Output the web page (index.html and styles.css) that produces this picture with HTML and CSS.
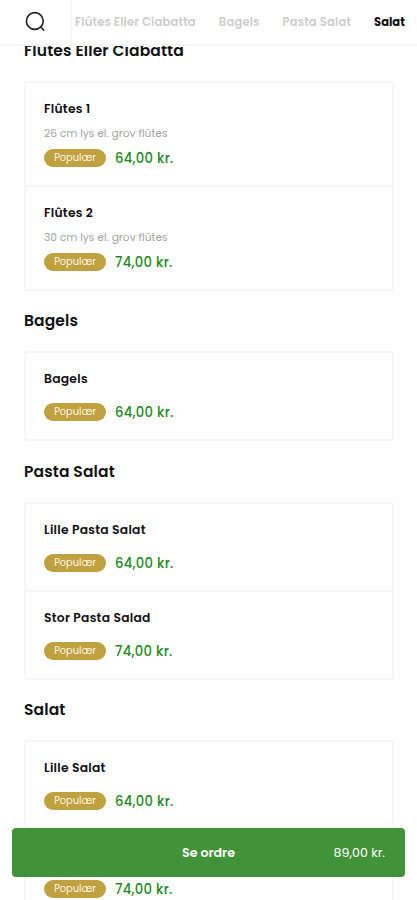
FILE: index.html
```html
<!DOCTYPE html>
<html lang="da">
<head>
<meta charset="utf-8">
<title>Menu</title>
<link rel="stylesheet" href="styles.css">
</head>
<body>
<header class="topbar">
  <div class="search">
    <svg width="22" height="22" viewBox="0 0 22 22" fill="none" stroke="#222" stroke-width="1.6" stroke-linecap="round"><circle cx="9.8" cy="10" r="8.4"/><path d="M15.8 16l3 3.2"/></svg>
  </div>
  <nav class="tabs">
    <a class="tab">Flûtes Eller Ciabatta</a>
    <a class="tab">Bagels</a>
    <a class="tab">Pasta Salat</a>
    <a class="tab active">Salat</a>
  </nav>
</header>
<main class="menu">
  <h2>Flûtes Eller Ciabatta</h2>
  <section class="card">
    <article class="item">
      <h3>Flûtes 1</h3>
      <p class="desc">26 cm lys el. grov flûtes</p>
      <div class="meta"><span class="badge">Populær</span><span class="price">64,00 kr.</span></div>
    </article>
    <article class="item">
      <h3>Flûtes 2</h3>
      <p class="desc">30 cm lys el. grov flûtes</p>
      <div class="meta"><span class="badge">Populær</span><span class="price">74,00 kr.</span></div>
    </article>
  </section>
  <h2>Bagels</h2>
  <section class="card">
    <article class="item">
      <h3>Bagels</h3>
      <div class="meta"><span class="badge">Populær</span><span class="price">64,00 kr.</span></div>
    </article>
  </section>
  <h2 class="spaced">Pasta Salat</h2>
  <section class="card">
    <article class="item">
      <h3>Lille Pasta Salat</h3>
      <div class="meta"><span class="badge">Populær</span><span class="price">64,00 kr.</span></div>
    </article>
    <article class="item">
      <h3>Stor Pasta Salad</h3>
      <div class="meta"><span class="badge">Populær</span><span class="price">74,00 kr.</span></div>
    </article>
  </section>
  <h2>Salat</h2>
  <section class="card">
    <article class="item">
      <h3>Lille Salat</h3>
      <div class="meta"><span class="badge">Populær</span><span class="price">64,00 kr.</span></div>
    </article>
    <article class="item">
      <h3>Stor Salat</h3>
      <div class="meta"><span class="badge">Populær</span><span class="price">74,00 kr.</span></div>
    </article>
  </section>
</main>
<button class="order"><span></span><strong>Se ordre</strong><span class="total">89,00 kr.</span></button>
</body>
</html>
```
FILE: styles.css
```css
* { box-sizing: border-box; margin: 0; padding: 0; }
html, body { height: 900px; overflow: hidden; }
body {
  background: #fefefe;
  color: #111;
  font-family: Poppins, Inter, "Open Sans", sans-serif;
  font-feature-settings: "cv11";
}
.topbar {
  position: fixed;
  top: 0;
  left: 0;
  right: 0;
  z-index: 2;
  height: 46px;
  display: flex;
  background: #fff;
  border-bottom: 2px solid #f6f6f6;
}
.search {
  width: 72px;
  flex: none;
  padding: 11px 0 0 25px;
  border-right: 2px solid #f7f7f7;
}
.tabs {
  display: flex;
  align-items: center;
  gap: 23px;
  padding-left: 3px;
  white-space: nowrap;
}
.tab { font-size: 11.5px; font-weight: 600; letter-spacing: .2px; color: #cdcdcd; }
.tab.active { color: #111; font-weight: 700; letter-spacing: 0; }
.menu { padding: 21px 23px 0 24px; }
h2 {
  height: 60px;
  line-height: 59px;
  font-size: 15.5px;
  font-weight: 600;
  letter-spacing: .13px;
}
.spaced { height: 61px; line-height: 61px; }
.card { border: 2px solid #f6f6f6; border-radius: 4px; }
.item { padding: 17px 18px 18px; }
.item + .item { border-top: 2px solid #f6f6f6; }
h3 { line-height: 17px; height: 20px; font-size: 12.3px; font-weight: 600; letter-spacing: .26px; }
.desc {
  margin: 6px 0 -6px;
  height: 16px;
  line-height: 16px;
  font-size: 10.7px;
  color: #a5a5a5;
}
.meta { display: flex; align-items: center; gap: 9px; height: 18px; margin-top: 13px; }
.badge {
  width: 62px;
  height: 18px;
  border-radius: 9px;
  background: #bfa13f;
  color: #fff8e5;
  font-size: 9.8px;
  line-height: 17px;
  text-align: center;
}
.price { color: #218a21; font-size: 13.2px; font-weight: 500; line-height: 17px; letter-spacing: .3px; }
.order {
  position: fixed;
  left: 12px;
  top: 828px;
  z-index: 3;
  width: 393px;
  height: 49px;
  padding: 0 20px;
  display: grid;
  grid-template-columns: 1fr auto 1fr;
  align-items: center;
  border: 0;
  border-radius: 4px;
  background: #41933a;
  color: #fff;
  font: inherit;
  font-size: 12.6px;
}
.order strong { font-weight: 600; }
.total { text-align: right; }
```
